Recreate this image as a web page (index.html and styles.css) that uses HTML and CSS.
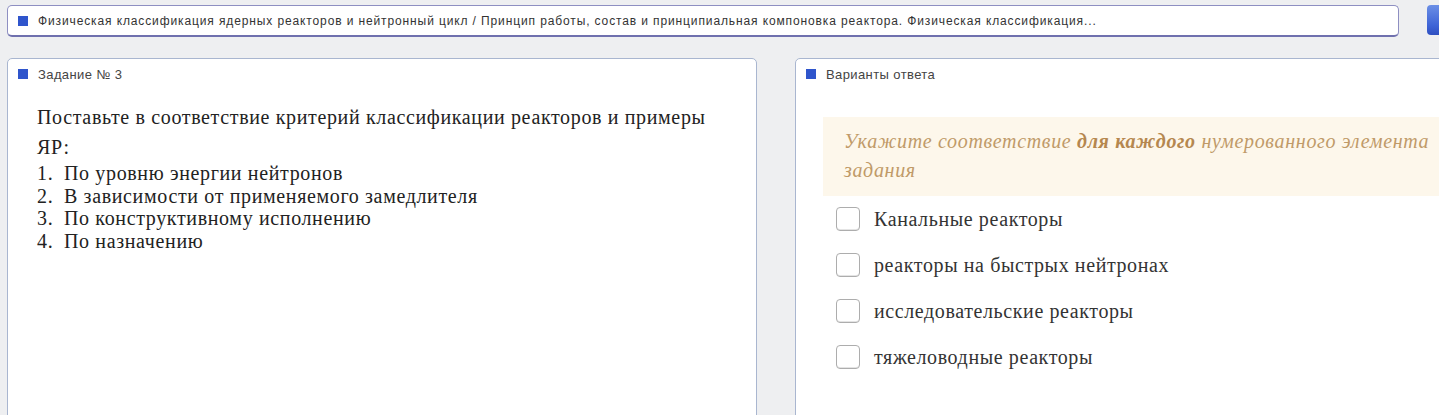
FILE: index.html
```html
<!DOCTYPE html>
<html lang="ru">
<head>
<meta charset="utf-8">
<title>Задание № 3</title>
<link rel="stylesheet" href="styles.css">
</head>
<body>
<div class="page">
  <div class="topline">
    <div class="crumb">
      <span class="mark"></span>
      <span class="crumb-text">Физическая классификация ядерных реакторов и нейтронный цикл / Принцип работы, состав и принципиальная компоновка реактора. Физическая классификация...</span>
    </div>
    <button class="nav-btn" type="button" aria-label="Далее"></button>
  </div>

  <div class="columns">
    <section class="panel">
      <header class="panel-head"><span class="mark"></span>Задание № 3</header>
      <div class="question">
        <p class="q-text">Поставьте в соответствие критерий классификации реакторов и примеры ЯР:</p>
        <ol class="q-list">
          <li>По уровню энергии нейтронов</li>
          <li>В зависимости от применяемого замедлителя</li>
          <li>По конструктивному исполнению</li>
          <li>По назначению</li>
        </ol>
      </div>
    </section>

    <section class="panel">
      <header class="panel-head"><span class="mark"></span>Варианты ответа</header>
      <div class="answers">
        <div class="hint">Укажите соответствие <b>для&nbsp;каждого</b> нумерованного элемента задания</div>
        <label class="option"><span class="box"></span>Канальные реакторы</label>
        <label class="option"><span class="box"></span>реакторы на быстрых нейтронах</label>
        <label class="option"><span class="box"></span>исследовательские реакторы</label>
        <label class="option"><span class="box"></span>тяжеловодные реакторы</label>
      </div>
    </section>
  </div>
</div>
</body>
</html>
```

FILE: styles.css
```css
html, body {
  margin: 0;
  height: 100%;
  overflow: hidden;
}

body {
  background: #eeeff1;
  font-family: "Liberation Sans", Arial, sans-serif;
  color: #333;
}

.page {
  width: 1540px;
  padding: 5px 0 0 7px;
}

.topline {
  display: flex;
  align-items: flex-start;
  gap: 28px;
}

.crumb {
  width: 1392px;
  height: 32px;
  box-sizing: border-box;
  background: #fff;
  border: 1px solid #8e8fc2;
  border-bottom: 2px solid #6f70ae;
  border-radius: 5px;
  display: flex;
  align-items: center;
  padding-left: 10px;
  font-size: 12px;
  letter-spacing: 0.88px;
  color: #333;
}

.mark {
  width: 10px;
  height: 10px;
  background: #2f55cc;
  flex: none;
  margin-right: 10px;
}

.nav-btn {
  width: 40px;
  height: 30px;
  border: none;
  border-radius: 4px;
  background: linear-gradient(#6b8fe6, #3d63d6 70%, #2f4fc0);
  padding: 0;
}

.columns {
  display: grid;
  grid-template-columns: 750px 750px;
  gap: 38px;
  margin-top: 21px;
}

.panel {
  background: #fff;
  border: 1px solid #a9b6d0;
  border-radius: 5px;
  height: 400px;
}

.panel-head {
  display: flex;
  align-items: center;
  height: 30px;
  padding: 0 10px;
  font-size: 13px;
  letter-spacing: 0.4px;
  color: #444;
}

.question {
  padding: 13px 30px 0 29px;
  font-family: "Liberation Serif", "Times New Roman", serif;
  color: #222;
  font-size: 20px;
  letter-spacing: 0.64px;
}

.q-text {
  margin: 0;
  line-height: 30px;
  width: 690px;
}

.q-list {
  margin: 0;
  padding: 0;
  list-style: none;
  counter-reset: item;
  line-height: 22.5px;
}

.q-list li {
  counter-increment: item;
  display: flex;
}

.q-list li::before {
  content: counter(item) ".";
  width: 27px;
  flex: none;
}

.answers {
  padding: 28px 0 0 27px;
  font-family: "Liberation Serif", "Times New Roman", serif;
}

.hint {
  background: #fdf7eb;
  color: #c09a68;
  font-style: italic;
  font-size: 20px;
  letter-spacing: 0.66px;
  line-height: 29px;
  padding: 10px 20px 11px 21px;
  width: 620px;
}

.hint b {
  color: #b5874f;
}

.option {
  display: flex;
  align-items: center;
  height: 46px;
  margin-left: 13px;
  font-size: 20px;
  letter-spacing: 0.6px;
  color: #333;
}

.box {
  width: 22px;
  height: 22px;
  border: 1px solid #adadad;
  border-radius: 4px;
  margin-right: 14px;
  flex: none;
  box-shadow: inset 0 -1px 0 #e4e4e4;
}
```
